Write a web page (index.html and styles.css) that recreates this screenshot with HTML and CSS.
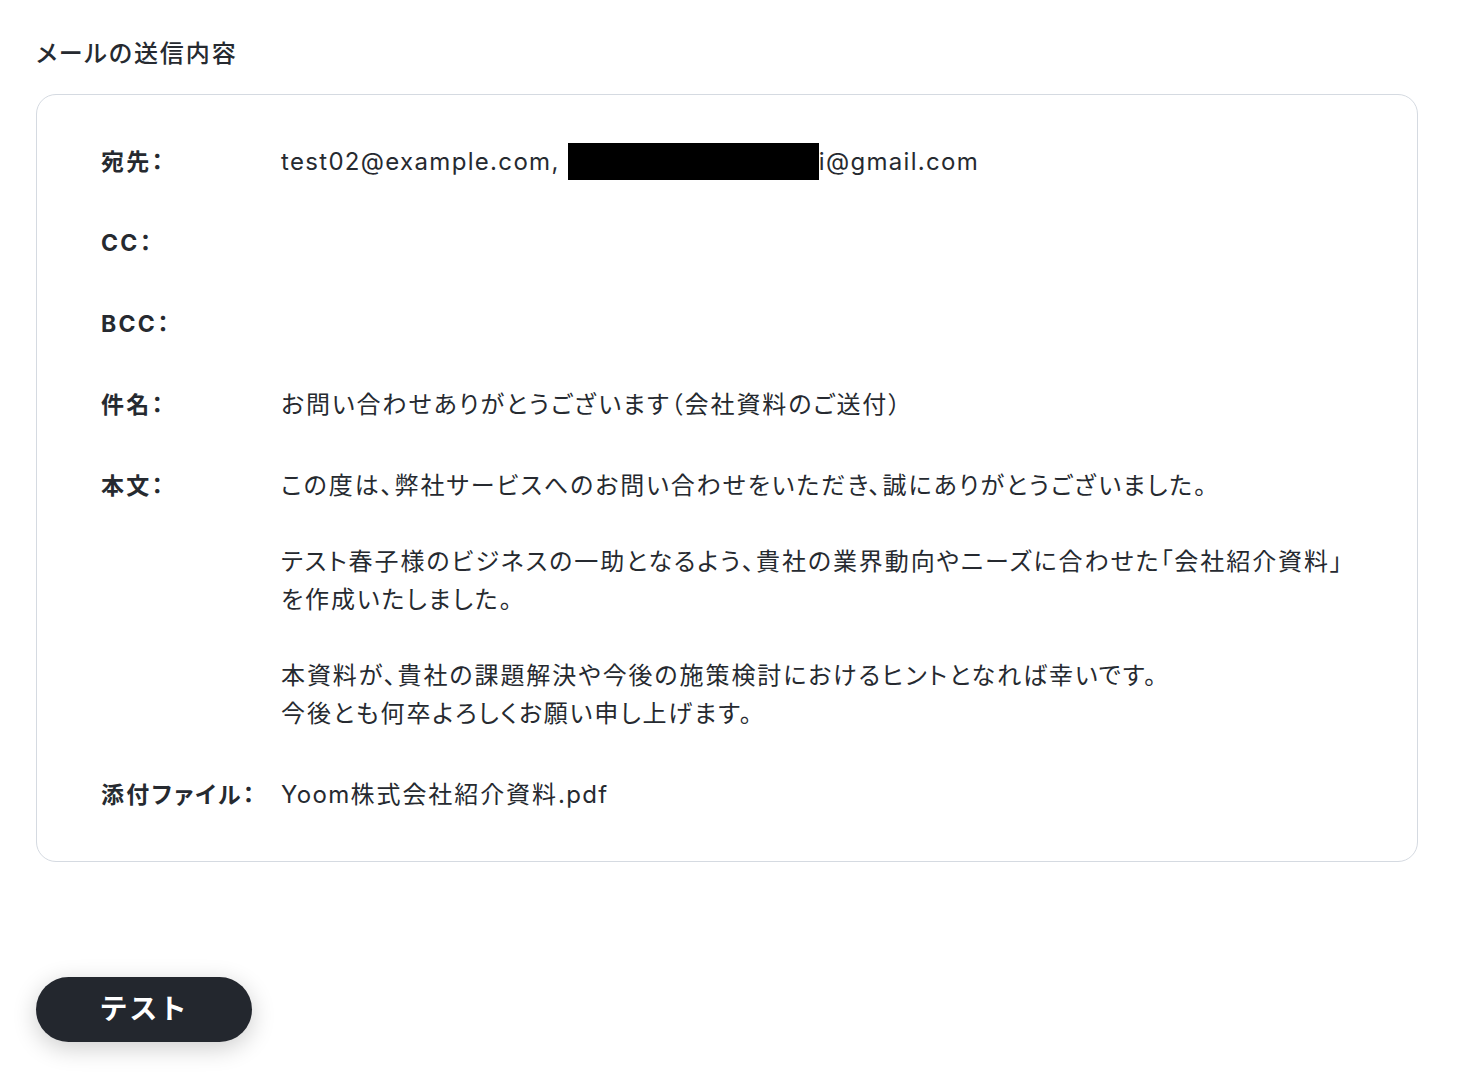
FILE: index.html
```html
<!DOCTYPE html>
<html lang="ja">
<head>
<meta charset="utf-8">
<title>メールの送信内容</title>
<link rel="stylesheet" href="styles.css">
</head>
<body>
<main class="page">
  <h1 class="title">メールの送信内容</h1>
  <section class="card">
    <div class="row">
      <div class="label">宛先：</div>
      <div class="value latin">test02@example.com, <span class="redact"></span>i@gmail.com</div>
    </div>
    <div class="row">
      <div class="label">CC：</div>
      <div class="value"></div>
    </div>
    <div class="row">
      <div class="label">BCC：</div>
      <div class="value"></div>
    </div>
    <div class="row">
      <div class="label">件名：</div>
      <div class="value">お問い合わせありがとうございます（会社資料のご送付）</div>
    </div>
    <div class="row">
      <div class="label">本文：</div>
      <div class="value">
        <p>この度は、弊社サービスへのお問い合わせをいただき、誠にありがとうございました。</p>
        <p>テスト春子様のビジネスの一助となるよう、貴社の業界動向やニーズに合わせた「会社紹介資料」<br>を作成いたしました。</p>
        <p>本資料が、貴社の課題解決や今後の施策検討におけるヒントとなれば幸いです。<br>今後とも何卒よろしくお願い申し上げます。</p>
      </div>
    </div>
    <div class="row">
      <div class="label">添付ファイル：</div>
      <div class="value"><span class="latin">Yoom</span>株式会社紹介資料<span class="latin">.pdf</span></div>
    </div>
  </section>
  <div class="actions">
    <button class="btn">テスト</button>
  </div>
</main>
</body>
</html>
```

FILE: styles.css
```css
* { box-sizing: border-box; }
html, body { margin: 0; padding: 0; background: #fff; }
body {
  font-family: Inter, "Noto Sans CJK JP", sans-serif;
  color: #262a30;
  font-feature-settings: "palt";
}
.page {
  padding: 36px 44px 44px 36px;
}
.title {
  margin: 0 0 22px;
  font-size: 24px;
  font-weight: 500;
  line-height: 36px;
  letter-spacing: 0.08em;
  color: #262a30;
}
.card {
  border: 1px solid #d5dae1;
  border-radius: 20px;
  padding: 48px 64px 47px;
  display: flex;
  flex-direction: column;
  gap: 43px;
}
.row {
  display: flex;
  font-size: 24px;
  line-height: 38px;
}
.label {
  width: 180px;
  flex: none;
  font-weight: 700;
  font-size: 23px;
  letter-spacing: 0.1em;
}
.value {
  flex: 1;
  min-height: 38px;
  letter-spacing: 0.08em;
}
.value.latin, .latin {
  letter-spacing: 0.055em;
}
.value p { margin: 0 0 38px; }
.value p:last-child { margin-bottom: 0; }
.redact {
  display: inline-block;
  width: 251px;
  height: 37px;
  background: #000;
  vertical-align: -10px;
}
.actions {
  margin-top: 115px;
}
.btn {
  width: 216px;
  height: 65px;
  border: none;
  border-radius: 33px;
  background: #23272e;
  color: #fff;
  font-family: Inter, "Noto Sans CJK JP", sans-serif;
  font-size: 28px;
  font-weight: 700;
  letter-spacing: 0.06em;
  padding-bottom: 6px;
  box-shadow: 0 6px 24px rgba(0,0,0,0.2);
}
```
